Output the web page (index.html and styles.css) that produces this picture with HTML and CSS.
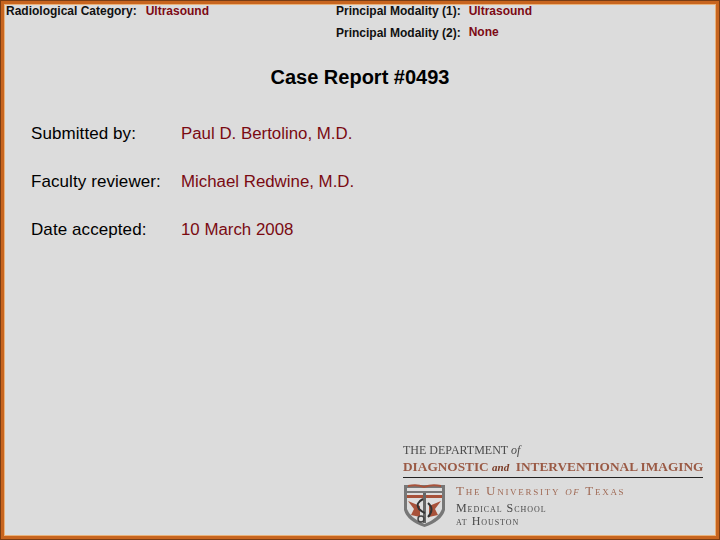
FILE: index.html
```html
<!DOCTYPE html>
<html lang="en">
<head>
<meta charset="utf-8">
<title>Case Report #0493</title>
<link rel="stylesheet" href="styles.css">
</head>
<body>
<main class="slide">
  <header class="top">
    <div class="top-left"><span class="label">Radiological Category:</span><span class="value cat">Ultrasound</span></div>
    <div class="top-right">
      <div class="mod"><span class="label">Principal Modality (1):</span><span class="value">Ultrasound</span></div>
      <div class="mod"><span class="label">Principal Modality (2):</span><span class="value up">None</span></div>
    </div>
  </header>
  <h1 class="title">Case Report #0493</h1>
  <dl class="info">
    <dt>Submitted by:</dt><dd>Paul D. Bertolino, M.D.</dd>
    <dt>Faculty reviewer:</dt><dd>Michael Redwine, M.D.</dd>
    <dt>Date accepted:</dt><dd>10 March 2008</dd>
  </dl>
  <footer class="logo">
    <div class="dept">THE DEPARTMENT <i>of</i></div>
    <div class="dii">DIAGNOSTIC <i>and</i>&nbsp; INTERVENTIONAL IMAGING</div>
    <div class="uni">
      <svg class="seal" width="41" height="43" viewBox="0 0 41 43" aria-hidden="true">
        <path d="M0 1 H41 V26 Q38 37 20.5 43 Q3 37 0 26Z" fill="#777"/>
        <path d="M3 4 H38 V25 Q35 34 20.5 40 Q6 34 3 25Z" fill="#dedede"/>
        <path d="M4 1 Q13 -1 20 2 Q28 -1 37 1 L37 3 Q28 1 20 4 Q13 1 4 3Z" fill="#a8523a"/>
        <path d="M3 7 H38 V9 H3Z" fill="#777"/>
        <path d="M3 11 H38 V14 H3Z" fill="#a8523a"/>
        <path d="M4 17 L16 22 L16 33 L7 31 L10 25Z M37 17 L25 22 L25 33 L34 31 L31 25Z" fill="#a8523a"/>
        <path d="M19 9 H22 V39 H19Z" fill="#666"/>
        <path d="M19 15 Q11 19 15 25 Q18 28 21 29 M24 19 Q31 25 24 33" fill="none" stroke="#333" stroke-width="2"/>
        <circle cx="17" cy="35" r="3" fill="none" stroke="#444" stroke-width="1.5"/>
      </svg>
      <div class="uni-text">
        <div class="ut">The University <i>of</i> Texas</div>
        <div class="ms">Medical School</div>
        <div class="ms">at Houston</div>
      </div>
    </div>
  </footer>
</main>
</body>
</html>
```
FILE: styles.css
```css
* { box-sizing: border-box; margin: 0; padding: 0; }
html, body { width: 720px; height: 540px; overflow: hidden; }
.slide {
  width: 720px; height: 540px;
  background: #dcdcdc;
  border: 4px solid #c8651f;
  outline: 1px solid #7a3d14;
  outline-offset: -1px;
  box-shadow: inset 0 0 0 1px #eab27a;
  display: flex; flex-direction: column;
  font-family: "Liberation Sans", Arial, sans-serif;
  color: #000;
}
.top { display: flex; height: 57px; font-size: 12px; font-weight: bold; }
.top-left { width: 332px; padding: 0 0 0 2px; line-height: 14px; }
.top-right { display: flex; flex-direction: column; gap: 8px; }
.mod { line-height: 14px; }
.label { color: #111; }
.value { color: #7c0a14; margin-left: 8px; }
.cat { margin-left: 9px; }
.up { position: relative; top: -1px; }
.title { font-size: 20px; font-weight: bold; text-align: center; line-height: 24px; margin-top: 4px; }
.info {
  display: grid; grid-template-columns: 150px 1fr; grid-auto-rows: 48px;
  padding: 35px 0 0 27px; font-size: 17px; line-height: 20px;
}
.info dt { letter-spacing: 0.08px; }
.info dd { color: #7a0a12; font-size: 16.85px; }
.logo {
  margin: auto 13px 8px auto; width: 300px;
  font-family: "Liberation Serif", serif; filter: blur(0.4px);
}
.dept { font-size: 12px; line-height: 14px; color: #4a4a4a; position: relative; top: 1px; }
.dii {
  font-size: 13.3px; line-height: 16px; margin-top: 3px; font-weight: bold; white-space: nowrap;
  color: #9a5a45; padding-bottom: 2px; border-bottom: 1px solid #222;
}
.dii i { color: #7a3a25; font-size: 11px; }
.uni { display: flex; margin-top: 6px; padding-left: 1px; }
.seal { flex: none; }
.uni-text { margin-left: 11px; }
.ut { font-size: 13px; line-height: 14px; font-variant: small-caps; letter-spacing: 1.72px; color: #a06a55; white-space: nowrap; }
.ms { font-size: 12px; line-height: 13px; font-variant: small-caps; letter-spacing: 0.95px; color: #4a4a4a; white-space: nowrap; }
.ut + .ms { margin-top: 4px; }
```
